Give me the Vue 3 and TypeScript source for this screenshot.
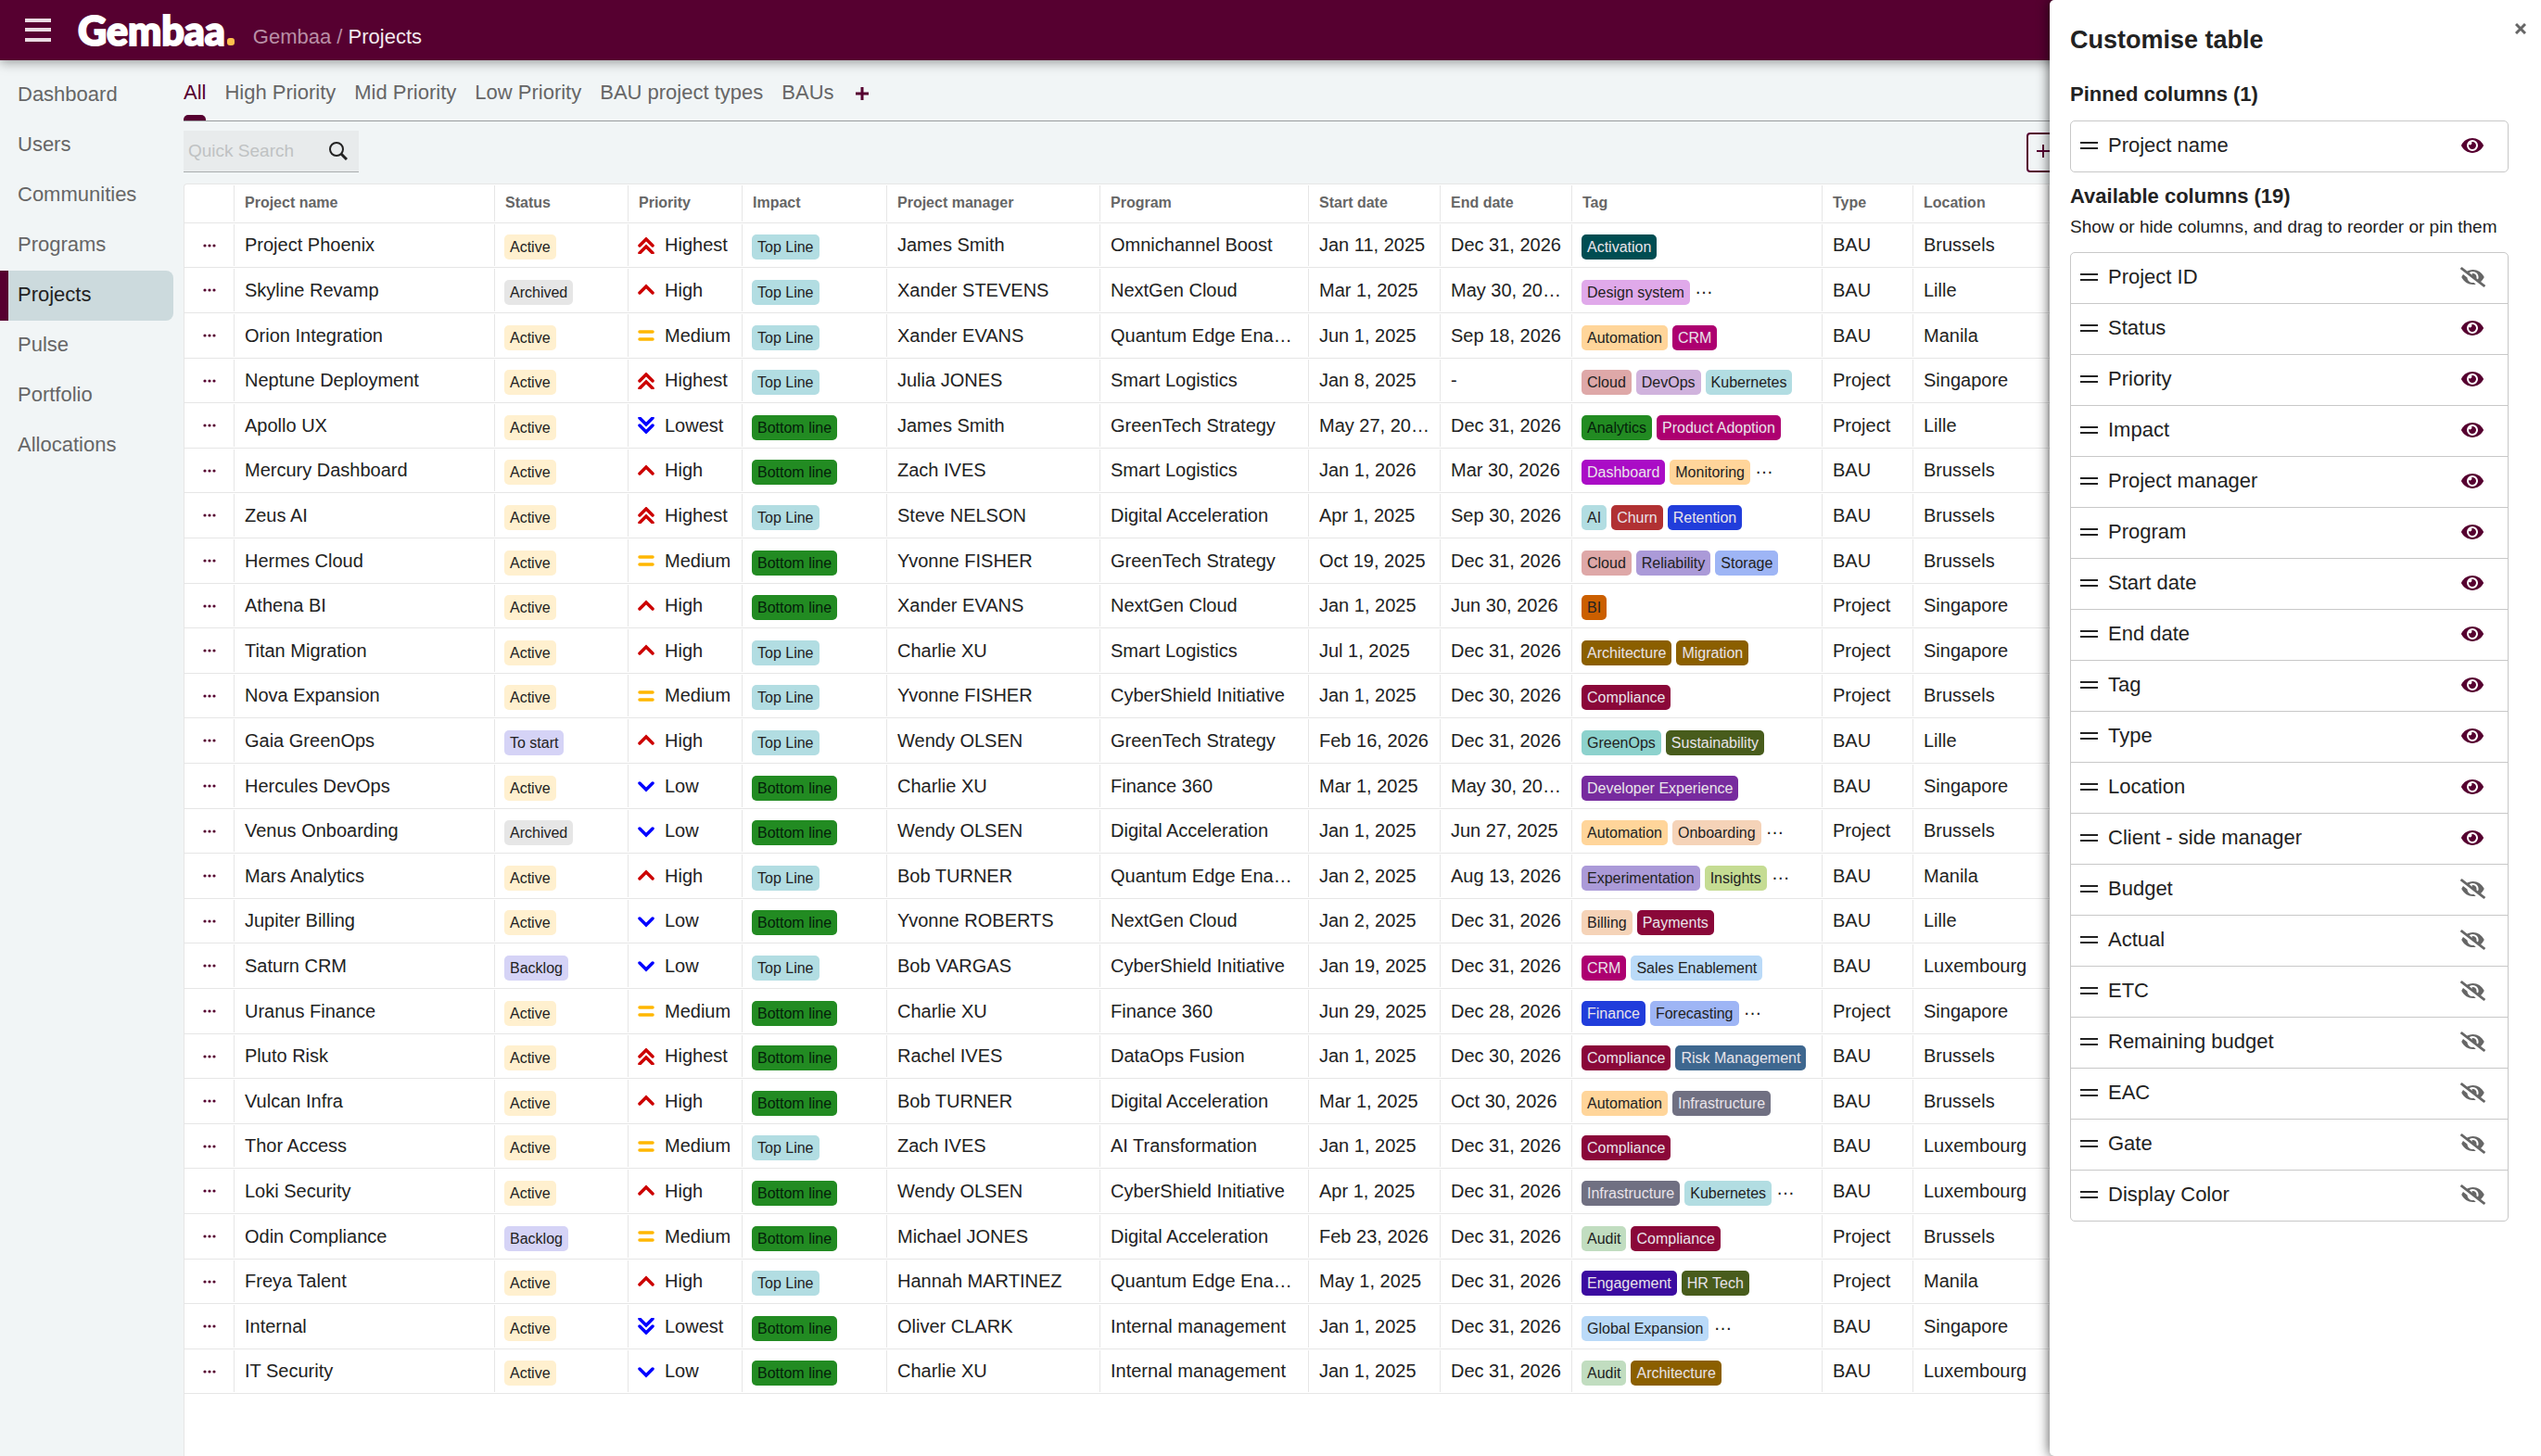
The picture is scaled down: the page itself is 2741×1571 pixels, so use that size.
<script setup lang="ts">
import { reactive, ref } from 'vue'

type Priority = 'Highest' | 'High' | 'Medium' | 'Low' | 'Lowest'

interface Project {
  name: string
  status: string
  priority: Priority
  impact: string
  manager: string
  program: string
  start: string
  end: string
  tags: string[]
  more: boolean
  type: string
  location: string
}

interface Column {
  label: string
  visible: boolean
}

const navItems = ['Dashboard', 'Users', 'Communities', 'Programs', 'Projects', 'Pulse', 'Portfolio', 'Allocations']
const tabs = ['All', 'High Priority', 'Mid Priority', 'Low Priority', 'BAU project types', 'BAUs']
const activeTab = ref('All')
const search = ref('')

const headers: [string, string][] = [
  ['Project name', 'name'],
  ['Status', 'status'],
  ['Priority', 'priority'],
  ['Impact', 'impact'],
  ['Project manager', 'manager'],
  ['Program', 'program'],
  ['Start date', 'date'],
  ['End date', 'date'],
  ['Tag', 'tag'],
  ['Type', 'type'],
  ['Location', 'location'],
]

const source = `
Project Phoenix|Active|Highest|Top Line|James Smith|Omnichannel Boost|Jan 11, 2025|Dec 31, 2026|Activation|BAU|Brussels
Skyline Revamp|Archived|High|Top Line|Xander STEVENS|NextGen Cloud|Mar 1, 2025|May 30, 2026|Design system,+|BAU|Lille
Orion Integration|Active|Medium|Top Line|Xander EVANS|Quantum Edge Ena…|Jun 1, 2025|Sep 18, 2026|Automation,CRM|BAU|Manila
Neptune Deployment|Active|Highest|Top Line|Julia JONES|Smart Logistics|Jan 8, 2025|-|Cloud,DevOps,Kubernetes|Project|Singapore
Apollo UX|Active|Lowest|Bottom line|James Smith|GreenTech Strategy|May 27, 2025|Dec 31, 2026|Analytics,Product Adoption|Project|Lille
Mercury Dashboard|Active|High|Bottom line|Zach IVES|Smart Logistics|Jan 1, 2026|Mar 30, 2026|Dashboard,Monitoring,+|BAU|Brussels
Zeus AI|Active|Highest|Top Line|Steve NELSON|Digital Acceleration|Apr 1, 2025|Sep 30, 2026|AI,Churn,Retention|BAU|Brussels
Hermes Cloud|Active|Medium|Bottom line|Yvonne FISHER|GreenTech Strategy|Oct 19, 2025|Dec 31, 2026|Cloud,Reliability,Storage|BAU|Brussels
Athena BI|Active|High|Bottom line|Xander EVANS|NextGen Cloud|Jan 1, 2025|Jun 30, 2026|BI|Project|Singapore
Titan Migration|Active|High|Top Line|Charlie XU|Smart Logistics|Jul 1, 2025|Dec 31, 2026|Architecture,Migration|Project|Singapore
Nova Expansion|Active|Medium|Top Line|Yvonne FISHER|CyberShield Initiative|Jan 1, 2025|Dec 30, 2026|Compliance|Project|Brussels
Gaia GreenOps|To start|High|Top Line|Wendy OLSEN|GreenTech Strategy|Feb 16, 2026|Dec 31, 2026|GreenOps,Sustainability|BAU|Lille
Hercules DevOps|Active|Low|Bottom line|Charlie XU|Finance 360|Mar 1, 2025|May 30, 2026|Developer Experience|BAU|Singapore
Venus Onboarding|Archived|Low|Bottom line|Wendy OLSEN|Digital Acceleration|Jan 1, 2025|Jun 27, 2025|Automation,Onboarding,+|Project|Brussels
Mars Analytics|Active|High|Top Line|Bob TURNER|Quantum Edge Ena…|Jan 2, 2025|Aug 13, 2026|Experimentation,Insights,+|BAU|Manila
Jupiter Billing|Active|Low|Bottom line|Yvonne ROBERTS|NextGen Cloud|Jan 2, 2025|Dec 31, 2026|Billing,Payments|BAU|Lille
Saturn CRM|Backlog|Low|Top Line|Bob VARGAS|CyberShield Initiative|Jan 19, 2025|Dec 31, 2026|CRM,Sales Enablement|BAU|Luxembourg
Uranus Finance|Active|Medium|Bottom line|Charlie XU|Finance 360|Jun 29, 2025|Dec 28, 2026|Finance,Forecasting,+|Project|Singapore
Pluto Risk|Active|Highest|Bottom line|Rachel IVES|DataOps Fusion|Jan 1, 2025|Dec 30, 2026|Compliance,Risk Management|BAU|Brussels
Vulcan Infra|Active|High|Bottom line|Bob TURNER|Digital Acceleration|Mar 1, 2025|Oct 30, 2026|Automation,Infrastructure|BAU|Brussels
Thor Access|Active|Medium|Top Line|Zach IVES|AI Transformation|Jan 1, 2025|Dec 31, 2026|Compliance|BAU|Luxembourg
Loki Security|Active|High|Bottom line|Wendy OLSEN|CyberShield Initiative|Apr 1, 2025|Dec 31, 2026|Infrastructure,Kubernetes,+|BAU|Luxembourg
Odin Compliance|Backlog|Medium|Bottom line|Michael JONES|Digital Acceleration|Feb 23, 2026|Dec 31, 2026|Audit,Compliance|Project|Brussels
Freya Talent|Active|High|Top Line|Hannah MARTINEZ|Quantum Edge Ena…|May 1, 2025|Dec 31, 2026|Engagement,HR Tech|Project|Manila
Internal|Active|Lowest|Bottom line|Oliver CLARK|Internal management|Jan 1, 2025|Dec 31, 2026|Global Expansion,+|BAU|Singapore
IT Security|Active|Low|Bottom line|Charlie XU|Internal management|Jan 1, 2025|Dec 31, 2026|Audit,Architecture|BAU|Luxembourg`

const projects: Project[] = source.trim().split('\n').map((line) => {
  const [name, status, priority, impact, manager, program, start, end, tagList, type, location] = line.split('|')
  const tags = tagList.split(',')
  return {
    name, status, priority: priority as Priority, impact, manager, program, start, end,
    tags: tags.filter((t) => t !== '+'),
    more: tags.includes('+'),
    type, location,
  }
})

const dark = '#222222'
const light = '#e9e4ea'

// [background, text] of every badge
const palette: Record<string, [string, string]> = {
  Active: ['#fff0cf', dark],
  Archived: ['#e6e6e6', dark],
  'To start': ['#d5d3f6', dark],
  Backlog: ['#d5d3f6', dark],
  'Top Line': ['#b2dde2', dark],
  'Bottom line': ['#228b22', '#04200a'],
  Activation: ['#004d52', light],
  'Design system': ['#e0a9ea', dark],
  Automation: ['#ffd59a', dark],
  Monitoring: ['#ffd59a', dark],
  CRM: ['#ad0070', light],
  'Product Adoption': ['#ad0070', light],
  Cloud: ['#dea8a8', dark],
  DevOps: ['#d0b3dd', dark],
  Kubernetes: ['#b2dde2', dark],
  AI: ['#b2dde2', dark],
  Analytics: ['#228b22', '#04200a'],
  Dashboard: ['#aa0cc6', light],
  Churn: ['#b13133', light],
  Retention: ['#213ddb', light],
  Finance: ['#213ddb', light],
  Reliability: ['#ab9ad8', dark],
  Experimentation: ['#ab9ad8', dark],
  Storage: ['#9eb5f5', dark],
  Forecasting: ['#9eb5f5', dark],
  BI: ['#cb5f00', dark],
  Architecture: ['#8b5f00', light],
  Migration: ['#8b5f00', light],
  Compliance: ['#8a0839', light],
  Payments: ['#8a0839', light],
  GreenOps: ['#8dd2cd', dark],
  Sustainability: ['#485c1c', light],
  'HR Tech': ['#485c1c', light],
  'Developer Experience': ['#772b9e', light],
  Onboarding: ['#f5d3b8', dark],
  Billing: ['#f5d3b8', dark],
  Insights: ['#c5dc93', dark],
  'Sales Enablement': ['#badaf8', dark],
  'Global Expansion': ['#badaf8', dark],
  'Risk Management': ['#3e678f', light],
  Infrastructure: ['#707082', light],
  Audit: ['#c1ddc0', dark],
  Engagement: ['#3b0ba0', light],
}

const badge = (name: string) => ({ background: palette[name][0], color: palette[name][1] })

const priorityIcon: Record<Priority, { d: string; color: string }> = {
  Highest: { d: 'M2 9 9 2l7 7M2 17l7-7 7 7', color: '#cc0000' },
  High: { d: 'M2 12l7-7 7 7', color: '#cc0000' },
  Medium: { d: 'M2 5h14M2 13h14', color: '#ffb700' },
  Low: { d: 'M2 6l7 7 7-7', color: '#0000ff' },
  Lowest: { d: 'M2 1l7 7 7-7M2 9l7 7 7-7', color: '#0000ff' },
}

const column = (label: string, visible = true): Column => ({ label, visible })
const pinned = reactive<Column[]>([column('Project name')])
const available = reactive<Column[]>([
  column('Project ID', false),
  ...['Status', 'Priority', 'Impact', 'Project manager', 'Program', 'Start date', 'End date', 'Tag', 'Type', 'Location', 'Client - side manager'].map((l) => column(l)),
  ...['Budget', 'Actual', 'ETC', 'Remaining budget', 'EAC', 'Gate', 'Display Color'].map((l) => column(l, false)),
])

const eye = 'M572.52 241.4C518.29 135.59 410.93 64 288 64S57.68 135.64 3.48 241.41a32.35 32.35 0 0 0 0 29.19C57.71 376.41 165.07 448 288 448s230.32-71.64 284.52-177.41a32.35 32.35 0 0 0 0-29.19zM288 400a144 144 0 1 1 144-144 143.93 143.93 0 0 1-144 144zm0-240a95.31 95.31 0 0 0-25.31 3.79 47.85 47.85 0 0 1-66.9 66.9A95.78 95.78 0 1 0 288 160z'
const eyeSlash = 'M320 400c-75.85 0-137.25-58.71-142.9-133.11L72.2 185.82c-13.79 17.3-26.48 35.59-36.72 55.59a32.35 32.35 0 0 0 0 29.19C89.71 376.41 197.07 448 320 448c26.91 0 52.87-4 77.89-10.46L346 397.39a144.13 144.13 0 0 1-26 2.61zm313.82 58.1l-110.55-85.44a331.25 331.25 0 0 0 81.25-102.07 32.35 32.35 0 0 0 0-29.19C550.29 135.59 442.93 64 320 64a308.15 308.15 0 0 0-147.32 37.7L45.46 3.37A16 16 0 0 0 23 6.18L3.37 31.45A16 16 0 0 0 6.18 53.9l588.36 454.73a16 16 0 0 0 22.46-2.81l19.64-25.27a16 16 0 0 0-2.82-22.45zm-183.72-142l-39.3-30.38A94.75 94.75 0 0 0 416 256a94.76 94.76 0 0 0-121.31-92.21A47.65 47.65 0 0 1 304 192a46.64 46.64 0 0 1-1.54 10l-73.61-56.89A142.31 142.31 0 0 1 320 112a143.92 143.92 0 0 1 144 144c0 21.63-5.29 41.79-13.9 60.11z'
</script>

<template>
  <div class="app">
    <header class="topbar">
      <button class="icon-button menu" type="button" aria-label="Menu">
        <svg width="28" height="25" viewBox="0 0 28 25"><path d="M0 2h28M0 12h28M0 23h28" stroke="#eadbe3" stroke-width="4" /></svg>
      </button>
      <a class="logo" href="#">Gembaa<span class="logo-dot"></span></a>
      <nav class="breadcrumb" aria-label="Breadcrumb">
        <a href="#">Gembaa</a><span class="sep"> / </span><a class="current" href="#">Projects</a>
      </nav>
    </header>

    <div class="body">
      <nav class="sidebar" aria-label="Main">
        <a v-for="item in navItems" :key="item" href="#" :class="{ active: item === 'Projects' }">{{ item }}</a>
      </nav>

      <main class="content">
        <div class="tabs" role="tablist">
          <button
            v-for="tab in tabs" :key="tab" type="button" role="tab" class="tab"
            :class="{ active: tab === activeTab }" :aria-selected="tab === activeTab" @click="activeTab = tab"
          >{{ tab }}</button>
          <button class="icon-button add-tab" type="button" aria-label="Add tab">
            <svg width="16" height="16" viewBox="0 0 16 16"><path d="M8 1v14M1 8h14" stroke="#560030" stroke-width="3" /></svg>
          </button>
        </div>

        <div class="toolbar">
          <label class="search">
            <input v-model="search" type="text" placeholder="Quick Search" aria-label="Quick Search" />
            <svg width="20" height="20" viewBox="0 0 20 20" fill="none" stroke="#222" stroke-width="2"><circle cx="8" cy="8" r="7" /><path d="M13 13l6 6" stroke-width="3" /></svg>
          </label>
          <button class="new-project" type="button" aria-label="New project">
            <svg width="16" height="16" viewBox="0 0 16 16"><path d="M8 1v14M1 8h14" stroke="#560030" stroke-width="2" /></svg>
          </button>
        </div>

        <div class="sheet">
          <table>
            <colgroup>
              <col class="c-actions" />
              <col v-for="h in headers" :key="h[0]" :class="'c-' + h[1]" />
              <col />
            </colgroup>
            <thead>
              <tr>
                <th></th>
                <th v-for="h in headers" :key="h[0]">{{ h[0] }}</th>
                <th></th>
              </tr>
            </thead>
            <tbody>
              <tr v-for="p in projects" :key="p.name">
                <td class="actions">
                  <button class="icon-button" type="button" :aria-label="'Actions for ' + p.name">
                    <svg width="14" height="4" viewBox="0 0 14 4" fill="#560030"><circle cx="2" cy="2" r="1.6" /><circle cx="7" cy="2" r="1.6" /><circle cx="12" cy="2" r="1.6" /></svg>
                  </button>
                </td>
                <td>{{ p.name }}</td>
                <td class="badges"><div class="badge-row"><span class="badge" :style="badge(p.status)">{{ p.status }}</span></div></td>
                <td class="badges">
                  <div class="priority">
                    <svg width="18" height="18" viewBox="0 0 18 18" fill="none" stroke-width="3.5" stroke-linecap="round" :stroke="priorityIcon[p.priority].color"><path :d="priorityIcon[p.priority].d" /></svg>
                    {{ p.priority }}
                  </div>
                </td>
                <td class="badges"><div class="badge-row"><span class="badge" :style="badge(p.impact)">{{ p.impact }}</span></div></td>
                <td>{{ p.manager }}</td>
                <td>{{ p.program }}</td>
                <td>{{ p.start }}</td>
                <td>{{ p.end }}</td>
                <td class="badges">
                  <div class="badge-row">
                    <span v-for="t in p.tags" :key="t" class="badge" :style="badge(t)">{{ t }}</span>
                    <span v-if="p.more" class="more">…</span>
                  </div>
                </td>
                <td>{{ p.type }}</td>
                <td>{{ p.location }}</td>
                <td></td>
              </tr>
            </tbody>
          </table>
        </div>
      </main>
    </div>

    <aside class="drawer" aria-label="Customise table">
      <button class="icon-button close" type="button" aria-label="Close">
        <svg width="12" height="12" viewBox="0 0 12 12"><path d="M1 1l10 10M11 1 1 11" stroke="#666" stroke-width="3" /></svg>
      </button>
      <h2>Customise table</h2>
      <h3>Pinned columns (1)</h3>
      <ul class="columns">
        <li v-for="c in pinned" :key="c.label">
          <svg width="19" height="8" viewBox="0 0 19 8"><path d="M0 1h19M0 7h19" stroke="#222" stroke-width="2" /></svg>
          <span class="label">{{ c.label }}</span>
          <button class="icon-button toggle" type="button" :aria-label="'Toggle ' + c.label" @click="c.visible = !c.visible">
            <svg v-if="c.visible" width="24" height="22" viewBox="0 0 576 512" fill="#560030"><path :d="eye" /></svg>
            <svg v-else width="27" height="22" viewBox="0 0 640 512" fill="#666"><path :d="eyeSlash" /></svg>
          </button>
        </li>
      </ul>
      <h3>Available columns (19)</h3>
      <p>Show or hide columns, and drag to reorder or pin them</p>
      <ul class="columns">
        <li v-for="c in available" :key="c.label">
          <svg width="19" height="8" viewBox="0 0 19 8"><path d="M0 1h19M0 7h19" stroke="#222" stroke-width="2" /></svg>
          <span class="label">{{ c.label }}</span>
          <button class="icon-button toggle" type="button" :aria-label="'Toggle ' + c.label" @click="c.visible = !c.visible">
            <svg v-if="c.visible" width="24" height="22" viewBox="0 0 576 512" fill="#560030"><path :d="eye" /></svg>
            <svg v-else width="27" height="22" viewBox="0 0 640 512" fill="#666"><path :d="eyeSlash" /></svg>
          </button>
        </li>
      </ul>
    </aside>
  </div>
</template>

<style>
body {
  margin: 0;
  background: #f1f5f6;
}
</style>

<style scoped>
.app {
  position: relative;
  display: flex;
  flex-direction: column;
  min-height: 100vh;
  overflow: hidden;
  background: #f1f5f6;
  color: #222;
  font-family: "Liberation Sans", Arial, sans-serif;
  font-size: 22px;
}

.app * {
  box-sizing: border-box;
}

button {
  font: inherit;
  cursor: pointer;
}

a {
  color: inherit;
  text-decoration: none;
}

svg {
  display: block;
  flex: none;
}

.icon-button {
  display: flex;
  align-items: center;
  justify-content: center;
  padding: 0;
  border: 0;
  background: none;
}

.topbar {
  position: relative;
  z-index: 1;
  display: flex;
  align-items: center;
  height: 65px;
  padding-left: 27px;
  background: #560030;
  box-shadow: 0 2px 12px rgba(0, 0, 0, 0.4);
}

.menu {
  margin-right: 29px;
}

.logo {
  display: flex;
  align-items: baseline;
  color: #fff;
  font-family: Lato, "Liberation Sans", sans-serif;
  font-size: 43px;
  font-weight: 900;
  line-height: 65px;
  -webkit-text-stroke: 2px #fff;
}

.logo-dot {
  width: 8px;
  height: 8px;
  margin-left: 2px;
  border-radius: 3px;
  background: #ffc04d;
}

.breadcrumb {
  margin-left: 20px;
  padding-top: 14px;
  color: #b98fa6;
  white-space: pre;
}

.breadcrumb .current {
  color: #f3e9ee;
}

.body {
  display: flex;
  flex: 1;
}

.sidebar {
  display: flex;
  flex-direction: column;
  width: 187px;
  padding-top: 11px;
}

.sidebar a {
  height: 54px;
  padding-left: 19px;
  color: #666;
  line-height: 52px;
}

.sidebar .active {
  padding-left: 10px;
  border-left: 9px solid #560030;
  border-radius: 0 8px 8px 0;
  background: #ccdadd;
  color: #222;
}

.content {
  display: flex;
  flex: 1;
  flex-direction: column;
  min-width: 0;
  margin-left: 11px;
}

.tabs {
  display: flex;
  align-items: flex-end;
  gap: 20px;
  height: 66px;
  border-bottom: 1px solid #999c9e;
}

.tab {
  padding: 0;
  border: 0;
  background: none;
  color: #666;
  line-height: 48px;
}

.tab::after {
  content: "";
  display: block;
  height: 6px;
  border-radius: 5px 5px 0 0;
}

.tab.active {
  color: #560030;
}

.tab.active::after {
  background: #560030;
}

.add-tab {
  height: 58px;
  margin-left: 2px;
}

.toolbar {
  display: flex;
  align-items: flex-start;
  padding: 10px 0 12px;
}

.search {
  display: flex;
  align-items: center;
  width: 189px;
  height: 45px;
  padding: 0 12px 0 5px;
  border-bottom: 1px solid #a9adae;
  background: #e8ebec;
}

.search input {
  flex: 1;
  min-width: 0;
  padding: 0;
  border: 0;
  outline: 0;
  background: none;
  color: #222;
  font: inherit;
  font-size: 19px;
}

.search input::placeholder {
  color: #bfc2c3;
  opacity: 1;
}

.new-project {
  display: flex;
  align-items: center;
  width: 161px;
  height: 43px;
  margin: 2px 394px 0 auto;
  padding: 0 0 3px 8px;
  border: 2px solid #560030;
  border-radius: 4px;
  background: none;
}

.sheet {
  flex: 1;
  border: 1px solid #e6e6e6;
  border-width: 1px 0 0 1px;
  border-radius: 4px 0 0 0;
  background: #fff;
}

table {
  width: 100%;
  border-spacing: 0;
  table-layout: fixed;
}

.c-actions { width: 54px; }
.c-name { width: 281px; }
.c-status { width: 144px; }
.c-priority { width: 123px; }
.c-impact { width: 156px; }
.c-manager { width: 230px; }
.c-program { width: 225px; }
.c-date { width: 142px; }
.c-tag { width: 270px; }
.c-type { width: 98px; }
.c-location { width: 146px; }

th,
td {
  overflow: hidden;
  padding: 0 11px;
  border-bottom: 1px solid #e6e6e6;
  background: linear-gradient(#e6e6e6, #e6e6e6) right 0 top 1px / 1px calc(100% - 2px) no-repeat;
  text-align: left;
  text-overflow: ellipsis;
  white-space: nowrap;
}

th {
  height: 42px;
  padding-bottom: 2px;
  color: #666;
  font-size: 16px;
}

td {
  height: 49px;
  font-size: 20px;
}

/* rows share 243px per group of five */
tbody tr:nth-child(5n + 1) td,
tbody tr:nth-child(5n + 4) td {
  height: 48px;
}

.actions .icon-button {
  margin: 0 auto;
}

.badges {
  padding: 0 10px;
}

.badge-row {
  display: flex;
  gap: 5px;
  padding-top: 4px;
}

.badge {
  height: 27px;
  padding: 0 6px;
  border-radius: 5px;
  font-size: 16px;
  line-height: 27px;
}

.more {
  line-height: 16px;
}

.priority {
  display: flex;
  align-items: center;
  gap: 11px;
}

.drawer {
  position: absolute;
  z-index: 2;
  top: 0;
  right: 0;
  bottom: 0;
  width: 530px;
  padding: 23px 35px 0 22px;
  border-radius: 5px 0 0 5px;
  background: #fff;
  box-shadow: 0 0 14px rgba(0, 0, 0, 0.7);
}

.close {
  position: absolute;
  top: 19px;
  right: 10px;
  width: 24px;
  height: 24px;
}

h2,
h3,
p {
  margin: 0;
}

h2 {
  font-size: 27px;
  line-height: 40px;
}

h3 {
  font-size: 22px;
  line-height: 32px;
}

h2 + h3 {
  margin: 23px 0 12px;
}

.columns + h3 {
  margin-top: 10px;
}

p {
  margin: 3px 0 13px;
  font-size: 19px;
  line-height: 28px;
  white-space: nowrap;
}

.columns {
  margin: 0;
  padding: 0;
  border: 1px solid #c8c8c8;
  border-radius: 5px;
  list-style: none;
}

.columns li {
  display: flex;
  align-items: center;
  height: 55px;
  padding: 0 20px 3px 10px;
  border-bottom: 1px solid #c8c8c8;
}

.columns li:last-child {
  height: 54px;
  border-bottom: 0;
}

.label {
  flex: 1;
  margin-left: 11px;
}

.toggle {
  width: 36px;
}
</style>
